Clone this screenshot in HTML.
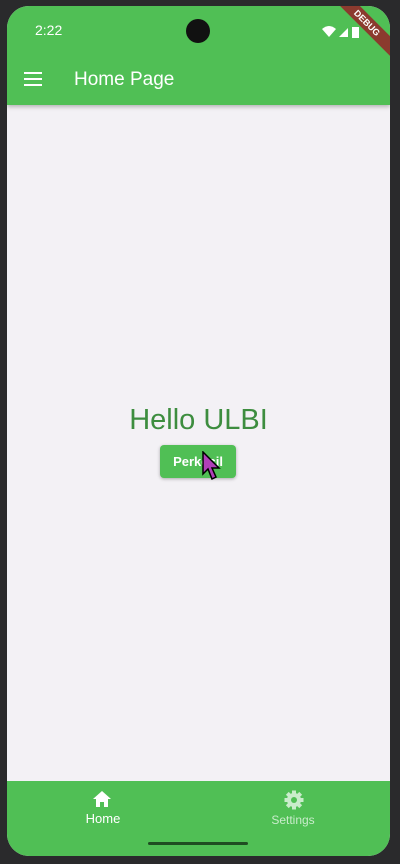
<!DOCTYPE html>
<html><head><style>
body{margin:0;width:400px;height:864px;background:#2a2a2c;font-family:"Liberation Sans",sans-serif;overflow:hidden;position:relative}
.scr{position:absolute;left:7px;top:6px;width:383px;height:850px;border-radius:22px;background:#f3f1f5;overflow:hidden}
.bar{position:absolute;left:0;top:0;width:383px;height:99px;background:#50bf55;box-shadow:0 2px 4px rgba(0,0,0,.25)}
.nav{position:absolute;left:0;bottom:0;width:383px;height:75px;background:#50bf55}
</style></head><body>
<div class="scr">
<div class="bar">
<div style="position:absolute;left:28px;top:16px;color:#fff;font-size:14px">2:22</div>
<div style="position:absolute;left:179px;top:13px;width:24px;height:24px;border-radius:50%;background:#111"></div>
<svg style="position:absolute;left:315px;top:18px" width="50" height="16"><path d="M0 5 Q7 -1 14 5 L7 13Z" fill="#fff"/><path d="M17 13 L26 4 L26 13Z" fill="#fff"/><rect x="30" y="3" width="7" height="11" fill="#fff"/></svg>
<div style="position:absolute;right:-22px;top:10px;width:90px;height:14px;background:#8b3a2e;transform:rotate(45deg);color:#fff;font-size:9px;font-weight:bold;text-align:center;line-height:14px">DEBUG</div>
<svg style="position:absolute;left:17px;top:66px" width="18" height="14"><rect y="0" width="18" height="2" fill="#fff"/><rect y="6" width="18" height="2" fill="#fff"/><rect y="12" width="18" height="2" fill="#fff"/></svg>
<div style="position:absolute;left:67px;top:63px;color:#fff;font-size:19px">Home Page</div>
</div>
<div style="position:absolute;left:0;width:383px;top:398px;text-align:center;color:#3d8d3f;font-size:29px">Hello ULBI</div>
<div style="position:absolute;left:153px;top:439px;width:76px;height:33px;background:#50bf55;border-radius:4px;box-shadow:0 1px 3px rgba(0,0,0,.3);color:#fff;font-size:13px;font-weight:bold;text-align:center;line-height:33px">Perkecil</div>
<svg style="position:absolute;left:195px;top:445px" width="24" height="34"><path d="M1 1 L1 23 L6 18 L10 28 L14 26 L10 17 L17 17Z" fill="#b040b8" stroke="#000" stroke-width="1.5"/></svg>
<div class="nav">
<svg style="position:absolute;left:86px;top:10px" width="18" height="16"><path d="M9 0 L18 8 L15 8 L15 16 L11 16 L11 11 L7 11 L7 16 L3 16 L3 8 L0 8Z" fill="#fff"/></svg>
<div style="position:absolute;left:66px;top:30px;width:60px;text-align:center;color:#fff;font-size:13px">Home</div>
<svg style="position:absolute;left:277px;top:9px" width="20" height="20" viewBox="0 0 20 20"><g fill="#c9eccb"><circle cx="10" cy="10" r="7"/><g stroke="#c9eccb" stroke-width="4"><line x1="10" y1="0.5" x2="10" y2="19.5"/><line x1="0.5" y1="10" x2="19.5" y2="10"/><line x1="3.3" y1="3.3" x2="16.7" y2="16.7"/><line x1="16.7" y1="3.3" x2="3.3" y2="16.7"/></g></g><circle cx="10" cy="10" r="3" fill="#50bf55"/></svg>
<div style="position:absolute;left:251px;top:32px;width:70px;text-align:center;color:#c9eccb;font-size:12px">Settings</div>
<div style="position:absolute;left:141px;top:61px;width:100px;height:3px;border-radius:2px;background:#1f4d22"></div>
</div>
</div>
</body></html>
